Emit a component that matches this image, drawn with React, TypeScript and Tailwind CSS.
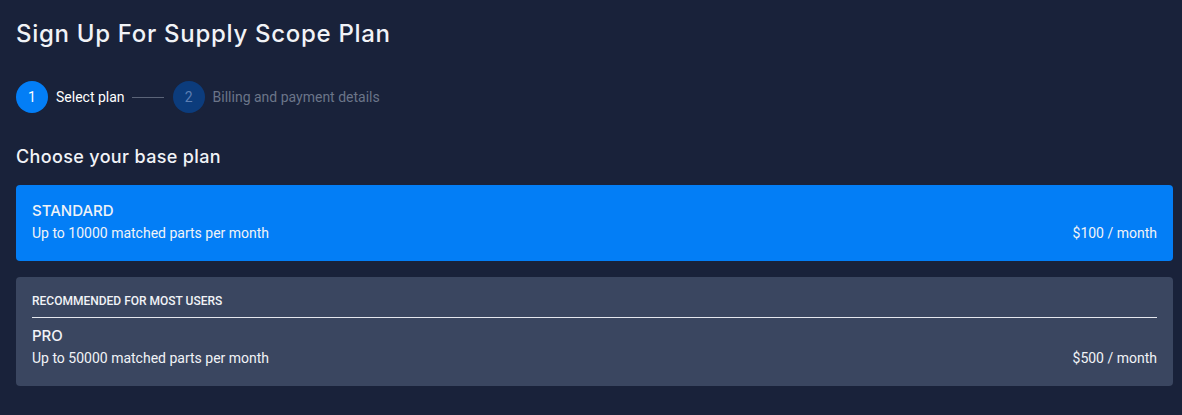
import React from "react";

const heading = { fontFamily: "Inter, 'Noto Sans', sans-serif" };

function Step({ n, label, active }: { n: number; label: string; active?: boolean }) {
  return (
    <div className="flex items-center gap-2">
      <div
        className={
          active
            ? "flex h-8 w-8 items-center justify-center rounded-full bg-[#037ef6] text-sm text-white"
            : "flex h-8 w-8 items-center justify-center rounded-full bg-[#0c3c7c] text-sm text-[#5d7fb3]"
        }
      >
        {n}
      </div>
      <span className={active ? "text-sm text-white" : "text-sm text-[#6b7589]"}>{label}</span>
    </div>
  );
}

function PlanRow({ name, desc, price }: { name: string; desc: string; price: string }) {
  return (
    <>
      <div className="text-[15px] leading-5 font-medium text-[#f1f3f7]" style={heading}>
        {name}
      </div>
      <div className="mt-0.5 flex items-center justify-between text-sm leading-5 text-[#f1f3f7]">
        <span>{desc}</span>
        <span>{price}</span>
      </div>
    </>
  );
}

export default function App() {
  return (
    <div
      className="min-h-[415px] bg-[#19223a] pt-[18px] pr-[9px] pl-4 text-white"
      style={{ fontFamily: "Roboto, 'Liberation Sans', sans-serif" }}
    >
      <h1 className="text-2xl leading-8 font-medium tracking-[0.7px] text-[#f1f3f7]" style={heading}>
        Sign Up For Supply Scope Plan
      </h1>

      {/* Stepper */}
      <div className="mt-[31px] flex items-center gap-[7px]">
        <Step n={1} label="Select plan" active />
        <div className="mr-0.5 h-px w-8 bg-[#5b6478]" />
        <Step n={2} label="Billing and payment details" />
      </div>

      <h2
        className="mt-[30px] text-lg leading-7 font-medium tracking-[0.35px] text-[#f1f3f7]"
        style={heading}
      >
        Choose your base plan
      </h2>

      <div className="mt-[14px] flex flex-col gap-4">
        <div className="rounded bg-[#037ef6] px-4 pt-4 pb-[18px]">
          <PlanRow name="STANDARD" desc="Up to 10000 matched parts per month" price="$100 / month" />
        </div>
        <div className="rounded bg-[#3a4660] px-4 pt-4 pb-[18px]">
          <div className="text-xs leading-4 font-medium text-[#f1f3f7]">RECOMMENDED FOR MOST USERS</div>
          <div className="mt-2 h-px bg-[#e4e7ee]" />
          <div className="mt-2">
            <PlanRow name="PRO" desc="Up to 50000 matched parts per month" price="$500 / month" />
          </div>
        </div>
      </div>
    </div>
  );
}
